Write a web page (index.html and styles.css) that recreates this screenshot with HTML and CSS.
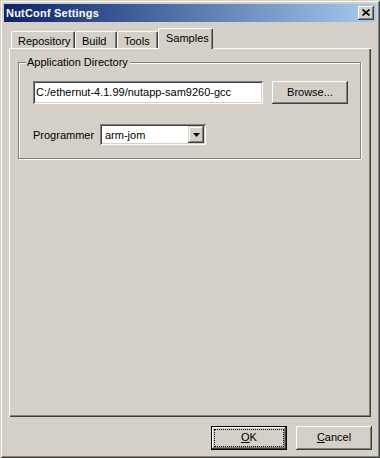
FILE: index.html
```html
<!DOCTYPE html>
<html>
<head>
<meta charset="utf-8">
<link rel="stylesheet" href="styles.css">
</head>
<body>
<div class="window">
  <div class="titlebar">
    <span class="title">NutConf Settings</span>
    <div class="closebtn"><svg width="8" height="7" viewBox="0 0 8 7"><path d="M0.5 0.5 L7.5 6.5 M7.5 0.5 L0.5 6.5" stroke="#000" stroke-width="1.6" fill="none"/></svg></div>
  </div>
  <div class="body">
    <div class="tabs">
      <div class="tab w-repo">Repository</div>
      <div class="tab w-build">Build</div>
      <div class="tab w-tools">Tools</div>
      <div class="tab sel w-samples">Samples</div>
    </div>
    <div class="panel">
      <div class="group">
        <div class="legend">Application Directory</div>
        <div class="row dir-row">
          <div class="field dir">C:/ethernut-4.1.99/nutapp-sam9260-gcc</div>
          <div class="btn browse">Browse...</div>
        </div>
        <div class="row prog-row">
          <span class="lbl">Programmer</span>
          <div class="field combo">
            <span class="combo-text">arm-jom</span>
            <div class="dropbtn"><svg width="7" height="4" viewBox="0 0 7 4"><path d="M0 0 H7 L3.5 4 Z" fill="#000"/></svg></div>
          </div>
        </div>
      </div>
    </div>
    <div class="buttons">
      <div class="btn default"><span class="focus"><u>O</u>K</span></div>
      <div class="btn cancel"><u>C</u>ancel</div>
    </div>
  </div>
</div>
</body>
</html>
```
FILE: styles.css
```css
html, body { margin: 0; padding: 0; background: #D4D0C8; }
body { font-family: "Liberation Sans", Arial, sans-serif; font-size: 11px; color: #000; }
.window {
  width: 380px; height: 458px; box-sizing: border-box; padding: 4px;
  background: #D4D0C8;
  box-shadow: inset 1px 1px #D4D0C8, inset -1px -1px #404040, inset 2px 2px #fff, inset -2px -2px #808080;
  display: flex; flex-direction: column;
}
.titlebar {
  height: 18px; flex: none;
  background: linear-gradient(to right, #0A246A, #A6CAF0);
  display: flex; align-items: center; justify-content: space-between;
  padding: 0 2px 0 2px;
}
.title { color: #fff; font-weight: bold; font-size: 11px; letter-spacing: 0.2px; }
.closebtn {
  width: 16px; height: 14px; box-sizing: border-box; background: #D4D0C8;
  box-shadow: inset -1px -1px #404040, inset 1px 1px #fff, inset -2px -2px #808080;
  display: flex; align-items: center; justify-content: center; padding: 0 1px 1px 0;
}
.closebtn svg { display: block; }
.body { flex: 1; display: flex; flex-direction: column; padding: 6px 4px 4px 5px; }
.tabs { height: 20px; display: flex; align-items: flex-end; padding-left: 2px; flex: none; }
.tab {
  height: 17px; box-sizing: border-box; padding: 3px 0 0 6px;
  border-left: 1px solid #fff; border-top: 1px solid #fff; border-right: 1px solid #404040;
  border-top-left-radius: 2px; border-top-right-radius: 2px;
  box-shadow: inset -1px 0 #808080;
}
.w-repo { width: 64px; }
.w-build { width: 42px; }
.w-tools { width: 41px; }
.tab.sel {
  width: 55px; height: 21px; margin-bottom: -1px; margin-left: 0px;
  background: #D4D0C8; z-index: 1; padding: 3px 0 0 7px;
}
.panel {
  width: 362px; height: 369px; box-sizing: border-box; flex: none;
  box-shadow: inset 1px 1px #fff, inset -1px -1px #404040, inset -2px -2px #808080;
  padding: 14px 0 0 9px;
}
.group {
  width: 343px; height: 97px; box-sizing: border-box;
  border: 1px solid #808080;
  box-shadow: 1px 1px #fff, inset 1px 1px #fff;
  padding: 0 0 0 14px;
}
.legend {
  display: inline-block; margin: -7px 0 0 -7px; padding: 0 2px 0 1px;
  background: #D4D0C8; line-height: 13px; vertical-align: top;
}
.row { display: flex; align-items: center; }
.dir-row { margin-top: 6px; }
.field {
  box-sizing: border-box; background: #fff;
  box-shadow: inset 1px 1px #808080, inset -1px -1px #fff, inset 2px 2px #404040, inset -2px -2px #D4D0C8;
}
.dir { width: 230px; height: 23px; line-height: 23px; padding-left: 3px; }
.btn {
  box-sizing: border-box; background: #D4D0C8; text-align: center;
  box-shadow: inset -1px -1px #404040, inset 1px 1px #fff, inset -2px -2px #808080;
}
.browse { width: 76px; height: 23px; line-height: 22px; margin-left: 9px; }
.prog-row { margin-top: 20px; }
.lbl { width: 67px; }
.combo { width: 106px; height: 21px; display: flex; align-items: center; padding: 2px; }
.combo-text { flex: 1; padding-left: 3px; }
.dropbtn {
  width: 16px; height: 17px; box-sizing: border-box; background: #D4D0C8;
  box-shadow: inset -1px -1px #404040, inset 1px 1px #D4D0C8, inset -2px -2px #808080, inset 2px 2px #fff;
  display: flex; align-items: center; justify-content: center;
}
.dropbtn svg { display: block; }
.buttons { display: flex; justify-content: flex-end; margin-top: 9px; gap: 9px; }
.buttons .btn { width: 76px; height: 24px; line-height: 23px; }
.btn.default {
  border: 1px solid #000; display: flex; padding: 3px;
}
.btn.default .focus {
  flex: 1; outline: 1px dotted #000; outline-offset: 0; line-height: 15px;
}
```
